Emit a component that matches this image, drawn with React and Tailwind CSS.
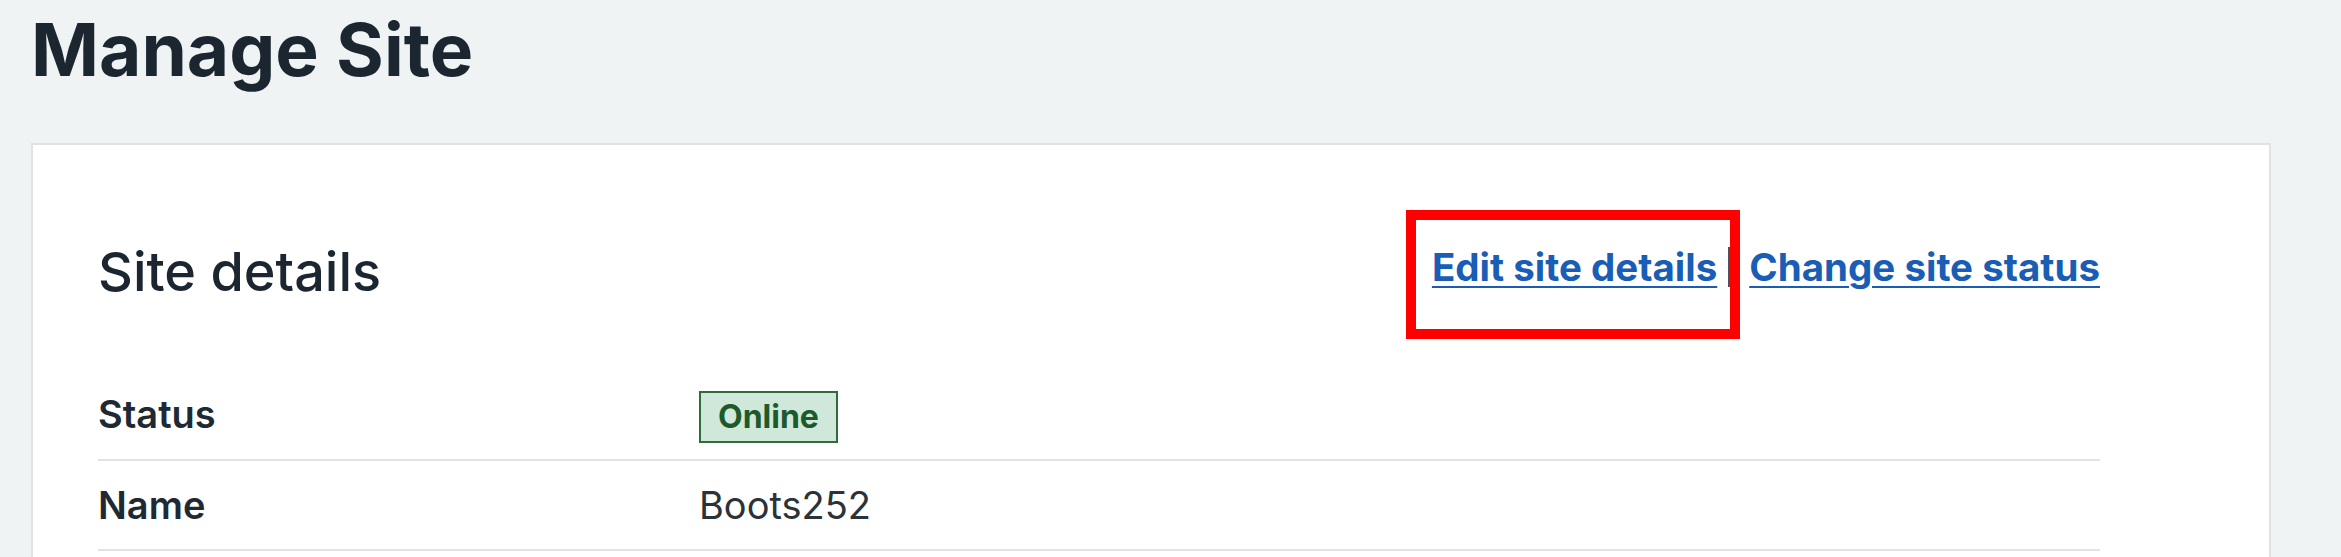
import React from 'react';

// Rows shown in the site details summary list.
const DETAILS = [
  { label: 'Status', value: 'Online', badge: true },
  { label: 'Name', value: 'Boots252' },
];

function StatusBadge({ children }) {
  return (
    <span className="inline-flex h-[52px] items-center border-2 border-[#2f6b3c] bg-[#cfe8d9] px-[17px] text-[32px] font-bold leading-none text-[#1d5a2b]">
      {children}
    </span>
  );
}

function DetailRow({ label, value, badge, height }) {
  return (
    <div className={`flex items-center border-b-2 border-[#dfe3e6] ${height}`}>
      <div className="w-[601px] shrink-0 text-[38px] font-semibold text-[#1f2933]">{label}</div>
      <div className="text-[38px] text-[#2b3238]">
        {badge ? <StatusBadge>{value}</StatusBadge> : value}
      </div>
    </div>
  );
}

export default function App() {
  return (
    <div
      className="min-h-screen bg-[#f0f3f4] pl-[31px] pr-[70px]"
      style={{ fontFamily: 'Inter, "Noto Sans", sans-serif' }}
    >
      <h1 className="pt-[6px] text-[73px] font-bold leading-[88px] text-[#1b2631]">Manage Site</h1>

      {/* Card holding the summary list */}
      <div className="relative mt-[49px] min-h-[420px] border-2 border-[#dfe3e6] bg-white pl-[65px] pr-[169px] pt-[95px]">
        <div className="flex items-start justify-between">
          <h2 className="text-[54px] font-medium leading-[64px] text-[#1b2631]">Site details</h2>
          <div className="mt-[4px] flex items-center text-[38.5px] font-bold leading-[46px] text-[#1a5db5]">
            <a href="#" className="underline decoration-2 underline-offset-[5px]">Edit site details</a>
            <span className="ml-[11px] mr-[19px] h-[40px] w-[2px] bg-[#4b5359]" />
            <a href="#" className="underline decoration-2 underline-offset-[5px]">Change site status</a>
          </div>
        </div>

        <div className="mt-[65px]">
          <DetailRow {...DETAILS[0]} height="h-[92px]" />
          <DetailRow {...DETAILS[1]} height="h-[90px]" />
        </div>

        {/* Annotation box around the edit link */}
        <div className="absolute left-[1373px] top-[65px] h-[129px] w-[334px] border-[10px] border-[#ff0000]" />
      </div>
    </div>
  );
}
